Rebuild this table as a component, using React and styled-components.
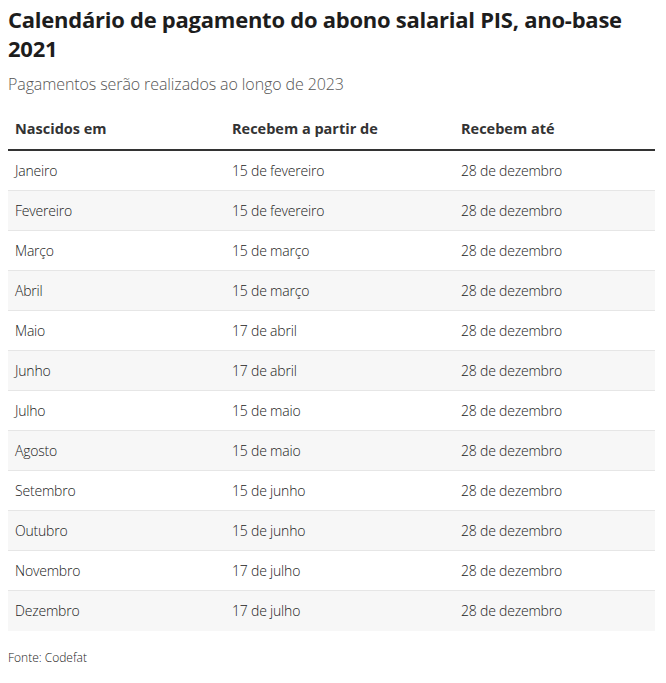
import React from "react";
import styled, { createGlobalStyle } from "styled-components";

const GlobalStyle = createGlobalStyle`
  body {
    margin: 0;
    background: #fff;
    font-family: "Open Sans", "Liberation Sans", sans-serif;
  }
`;

const Page = styled.div`
  width: 647px;
  padding: 5px 0 0 8px;
`;

const Title = styled.h1`
  margin: 0;
  font-size: 22px;
  line-height: 29px;
  font-weight: 700;
  letter-spacing: -0.25px;
  color: #1d1d1d;
`;

const Subtitle = styled.p`
  margin: 10px 0 0;
  font-size: 16px;
  line-height: 22px;
  font-weight: 300;
  letter-spacing: -0.1px;
  color: #555;
`;

const Table = styled.div`
  margin-top: 13px;
  display: grid;
  grid-template-columns: 217px 229px 1fr;
`;

const HeadCell = styled.div`
  height: 43px;
  padding: 0 7px;
  display: flex;
  align-items: center;
  font-size: 14.5px;
  font-weight: 700;
  color: #333;
  border-bottom: 2px solid #333;
  box-sizing: border-box;
`;

const Row = styled.div`
  display: contents;
`;

const Cell = styled.div`
  height: 40px;
  padding: 0 7px;
  display: flex;
  align-items: center;
  font-size: 14px;
  font-weight: 300;
  letter-spacing: -0.2px;
  color: #222;
  box-sizing: border-box;
  background: ${(p) => (p.$striped ? "#f7f7f7" : "#fff")};
  border-bottom: 1px solid ${(p) => (p.$last ? "transparent" : "#e6e6e6")};
`;

const Source = styled.p`
  margin: 19px 0 0;
  font-size: 12px;
  line-height: 16px;
  font-weight: 300;
  color: #222;
`;

const rows = [
  ["Janeiro", "15 de fevereiro", "28 de dezembro"],
  ["Fevereiro", "15 de fevereiro", "28 de dezembro"],
  ["Março", "15 de março", "28 de dezembro"],
  ["Abril", "15 de março", "28 de dezembro"],
  ["Maio", "17 de abril", "28 de dezembro"],
  ["Junho", "17 de abril", "28 de dezembro"],
  ["Julho", "15 de maio", "28 de dezembro"],
  ["Agosto", "15 de maio", "28 de dezembro"],
  ["Setembro", "15 de junho", "28 de dezembro"],
  ["Outubro", "15 de junho", "28 de dezembro"],
  ["Novembro", "17 de julho", "28 de dezembro"],
  ["Dezembro", "17 de julho", "28 de dezembro"],
];

export default function App() {
  return (
    <>
      <GlobalStyle />
      <Page>
        <Title>Calendário de pagamento do abono salarial PIS, ano-base 2021</Title>
        <Subtitle>Pagamentos serão realizados ao longo de 2023</Subtitle>
        <Table>
          <HeadCell>Nascidos em</HeadCell>
          <HeadCell>Recebem a partir de</HeadCell>
          <HeadCell>Recebem até</HeadCell>
          {rows.map((r, i) => (
            <Row key={r[0]}>
              {r.map((v, j) => (
                <Cell key={j} $striped={i % 2 === 1} $last={i === rows.length - 1}>
                  {v}
                </Cell>
              ))}
            </Row>
          ))}
        </Table>
        <Source>Fonte: Codefat</Source>
      </Page>
    </>
  );
}
